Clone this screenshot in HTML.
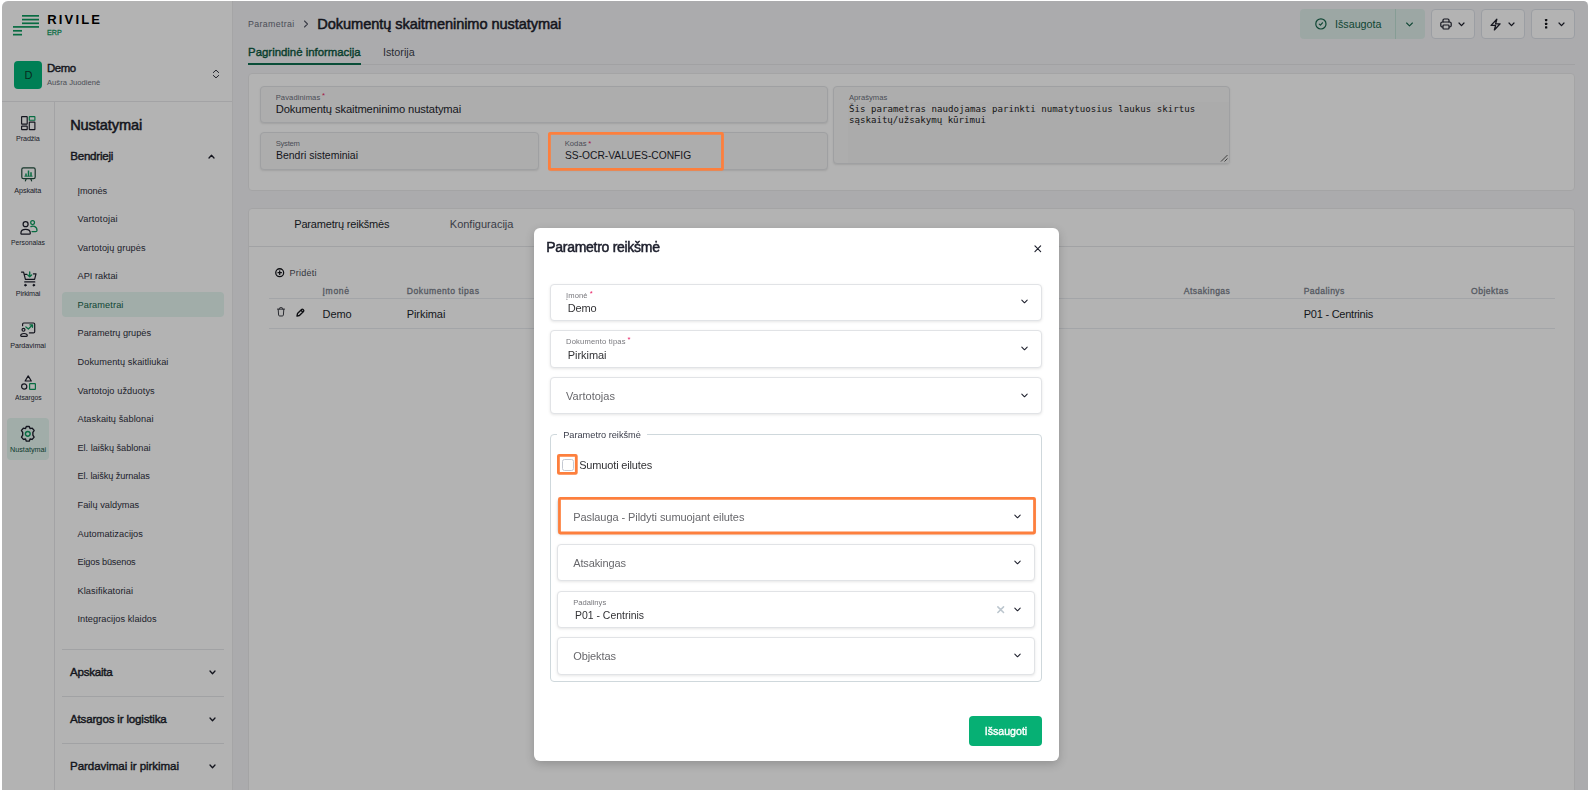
<!DOCTYPE html>
<html lang="lt"><head><meta charset="utf-8"><title>Dokumentų skaitmeninimo nustatymai</title>
<style>
html,body{margin:0;padding:0;}
body{width:1588px;height:790px;overflow:hidden;background:#fff;position:relative;font-family:"Liberation Sans",sans-serif;}
#app{position:absolute;left:0;top:0;width:1588px;height:790px;background:#f4f4f7;overflow:hidden;clip-path:inset(1px 0 0 2px round 6px 4.5px 0 0);}
#dim{position:absolute;left:0;top:0;width:1588px;height:790px;background:rgba(0,0,0,.298);}
#ann{position:absolute;left:0;top:0;width:1588px;height:790px;overflow:hidden;will-change:transform;}
.t{position:absolute;white-space:nowrap;display:block;}
.b{position:absolute;box-sizing:border-box;}
svg{position:absolute;overflow:visible;}
.fld{position:absolute;box-sizing:border-box;background:#f7f7f7;border:1px solid #e3e4e7;border-radius:4px;box-shadow:0 1px 2px rgba(0,0,0,.10);}
.mf{position:absolute;box-sizing:border-box;background:#fff;border:1px solid #e1e3e6;border-radius:4px;box-shadow:0 1px 3px rgba(0,0,0,.10);}
.btn{position:absolute;box-sizing:border-box;background:#fff;border:1px solid #dde1e9;border-radius:4px;}
.hl{position:absolute;box-sizing:border-box;border:2.7px solid #fd7f3d;border-radius:2px;}
i.p{display:inline-block;width:0;height:0;vertical-align:baseline;}

</style></head>
<body>
<div id="app">
<!-- sidebar -->
<div class="b" style="left:0;top:0;width:233px;height:790px;background:#fff;border-right:1px solid #ebebed;"></div>
<div class="b" style="left:0;top:101px;width:232px;height:1px;background:#e9e9eb;"></div>
<div class="b" style="left:54px;top:101px;width:1px;height:689px;background:#e9e9eb;"></div>
<!-- logo -->
<svg style="left:13px;top:15.15px" width="26" height="21" viewBox="0 0 26 21">
<g fill="#0c9a5e"><rect x="9" y="0" width="17" height="1.7"/><rect x="9" y="3.75" width="17" height="1.7"/><rect x="9" y="7.45" width="17" height="1.7"/><rect x="0" y="11.05" width="26" height="1.7"/><rect x="0" y="14.95" width="9" height="1.7"/><rect x="0" y="18.8" width="9" height="1.7"/></g></svg>
<div class="b" style="left:14px;top:61px;width:28px;height:28px;border-radius:4px;background:#00b67a;"></div>
<svg style="left:212px;top:69px" width="8" height="10" viewBox="0 0 8 10" fill="none" stroke="#1d1f2c" stroke-width="0.9" stroke-linecap="round" stroke-linejoin="round"><path d="M1.3 3.6 L4 1.1 L6.7 3.6"/><path d="M1.3 6.4 L4 8.9 L6.7 6.4"/></svg>
<!-- rail highlight -->
<div class="b" style="left:7px;top:418px;width:42px;height:42px;border-radius:4px;background:#e5f7f1;"></div>
<!-- menu highlight -->
<div class="b" style="left:62px;top:292px;width:162px;height:25px;border-radius:4px;background:#e5f7f1;"></div>
<!-- section dividers -->
<div class="b" style="left:62px;top:649px;width:162px;height:1px;background:#e6e7ea;"></div>
<div class="b" style="left:62px;top:696px;width:162px;height:1px;background:#e6e7ea;"></div>
<div class="b" style="left:62px;top:743px;width:162px;height:1px;background:#e6e7ea;"></div>
<!-- chevrons sidebar -->
<svg style="left:207.5px;top:153.5px" width="7" height="5" viewBox="0 0 7 5" fill="none" stroke="#1d1f2c" stroke-width="1.3" stroke-linecap="round" stroke-linejoin="round"><path d="M1 4 L3.5 1.3 L6 4"/></svg>
<svg style="left:208.5px;top:669.6px" width="7" height="5" viewBox="0 0 7 5" fill="none" stroke="#1d1f2c" stroke-width="1.3" stroke-linecap="round" stroke-linejoin="round"><path d="M1 1 L3.5 3.7 L6 1"/></svg>
<svg style="left:208.5px;top:716.6px" width="7" height="5" viewBox="0 0 7 5" fill="none" stroke="#1d1f2c" stroke-width="1.3" stroke-linecap="round" stroke-linejoin="round"><path d="M1 1 L3.5 3.7 L6 1"/></svg>
<svg style="left:208.5px;top:763.6px" width="7" height="5" viewBox="0 0 7 5" fill="none" stroke="#1d1f2c" stroke-width="1.3" stroke-linecap="round" stroke-linejoin="round"><path d="M1 1 L3.5 3.7 L6 1"/></svg>
<!-- rail icons -->
<svg style="left:20.8px;top:115.7px" width="14.5" height="14.2" viewBox="0 0 14.5 14.2" fill="none" stroke="#1d1f2c" stroke-width="1.15" stroke-linejoin="round"><rect x="0.6" y="0.6" width="5.6" height="7.6" rx="0.4"/><rect x="0.6" y="10.1" width="5.6" height="3.5" rx="0.4"/><rect x="8.3" y="0.6" width="5.6" height="3.7" rx="0.4" stroke="#0c9a5e"/><rect x="8.3" y="6.2" width="5.6" height="7.4" rx="0.4"/></svg>
<svg style="left:20.5px;top:167.3px" width="15" height="15" viewBox="0 0 15 15" fill="none" stroke="#1f4d3d" stroke-width="1.2" stroke-linecap="round" stroke-linejoin="round"><rect x="0.8" y="0.8" width="13.4" height="10.8" rx="1.6"/><path d="M4.4 13.9 L5.2 11.8 M10.6 13.9 L9.8 11.8"/><g stroke="#0c9a5e" stroke-width="1.5" stroke-linecap="butt"><path d="M5 9.3 V6.6 M7.5 9.3 V3.4 M10 9.3 V5.2"/><path d="M3.4 9.2 H11.6" stroke-width="0.9"/></g></svg>
<svg style="left:19.5px;top:219.5px" width="18" height="15" viewBox="0 0 18 15" fill="none" stroke-width="1.25" stroke-linecap="round" stroke-linejoin="round"><g stroke="#0c9a5e"><circle cx="12.6" cy="2.6" r="1.9"/><path d="M10.9 6.6 Q12.6 5.7 14.4 6.3 Q17 7.4 17 10.4 Q17 11.6 15.6 11.6 H12"/></g><g stroke="#1d1f2c"><circle cx="5.6" cy="4.2" r="2.5"/><path d="M0.9 13.2 Q0.9 9.4 5.6 9.4 Q10.3 9.4 10.3 13.2 Q10.3 14.2 9.2 14.2 H2 Q0.9 14.2 0.9 13.2 Z"/></g></svg>
<svg style="left:20.5px;top:270.8px" width="16" height="16" viewBox="0 0 16 16" fill="none" stroke="#1d1f2c" stroke-width="1.2" stroke-linecap="round" stroke-linejoin="round"><path d="M0.5 1.1 H2.6 L4.4 8.4 H13.6 L15 2.9 H12.4 M3.3 3.3 H6"/><path d="M3.7 10.9 H13.8"/><circle cx="4.4" cy="14.2" r="0.85" fill="#1d1f2c" stroke-width="0.9"/><circle cx="12.8" cy="14.2" r="0.85" fill="#1d1f2c" stroke-width="0.9"/><g stroke="#0c9a5e" stroke-width="1.35"><path d="M8.7 0.9 V5.2 M6.8 3.9 L8.7 5.8 L10.6 3.9"/></g></svg>
<svg style="left:20.3px;top:322.3px" width="16" height="15" viewBox="0 0 16 15" fill="none" stroke="#1d1f2c" stroke-width="1.2" stroke-linecap="round" stroke-linejoin="round"><path d="M2.6 3.7 V2.2 Q2.6 1 3.8 1 H13.5 Q14.7 1 14.7 2.2 V9.7 Q14.7 10.9 13.5 10.9 H9.4"/><circle cx="3.5" cy="7.8" r="1.45"/><path d="M0.7 13.6 Q0.7 11.5 4 11.5 Q7.3 11.5 7.3 13.6 Q7.3 14.4 6.5 14.4 H1.5 Q0.7 14.4 0.7 13.6 Z"/><g stroke="#0c9a5e" stroke-width="1.3"><path d="M5.9 5 L8.4 7 L12.2 3.1 M9.9 2.8 H12.5 V5.3"/></g></svg>
<svg style="left:20.8px;top:374.6px" width="15" height="15" viewBox="0 0 15 15" fill="none" stroke="#1d1f2c" stroke-width="1.2" stroke-linejoin="round"><path d="M7.2 0.9 L10.3 6 H4.1 Z"/><circle cx="3.2" cy="11.5" r="2.6"/><rect x="8.6" y="8.6" width="5.8" height="5.8" rx="0.5" stroke="#0c9a5e"/></svg>
<svg style="left:20.2px;top:426.2px" width="15.6" height="15.6" viewBox="-6.8 -6.9 13.6 13.8" fill="none" stroke="#1d1f2c" stroke-width="1.2" stroke-linejoin="round"><path d="M-1.3 -6.5 H1.3 L2 -4.6 L3.9 -5 L5.6 -2.9 L4.5 -1.2 L4.5 1.2 L5.6 2.9 L3.9 5 L2 4.6 L1.3 6.5 H-1.3 L-2 4.6 L-3.9 5 L-5.6 2.9 L-4.5 1.2 L-4.5 -1.2 L-5.6 -2.9 L-3.9 -5 L-2 -4.6 Z"/><circle cx="0" cy="0" r="2.1" stroke="#0c9a5e" stroke-width="1.3"/></svg>

<!-- header -->
<svg style="left:302.5px;top:20px" width="6" height="8" viewBox="0 0 6 8" fill="none" stroke="#555866" stroke-width="1.1" stroke-linecap="round" stroke-linejoin="round"><path d="M1.5 1 L4.5 4 L1.5 7"/></svg>
<div class="b" style="left:248px;top:64px;width:1327px;height:1px;background:#e6e6e9;"></div>
<div class="b" style="left:248px;top:63px;width:113px;height:2px;background:#0e6e50;"></div>
<!-- top buttons -->
<div class="b" style="left:1300px;top:9px;width:125px;height:30px;border-radius:4px;background:#deeeea;"></div>
<div class="b" style="left:1395px;top:9px;width:1px;height:30px;background:#bfe0d4;"></div>
<svg style="left:1315px;top:18.4px" width="11.8" height="11.8" viewBox="0 0 11.8 11.8" fill="none" stroke="#17654b" stroke-width="1.2" stroke-linecap="round" stroke-linejoin="round"><circle cx="5.9" cy="5.9" r="5.1"/><path d="M4.3 6.1 L5.4 7.1 L7.5 4.8"/></svg>
<svg style="left:1406.4px;top:22px" width="7" height="5" viewBox="0 0 7 5" fill="none" stroke="#17654b" stroke-width="1.1" stroke-linecap="round" stroke-linejoin="round"><path d="M0.6 1 L3.5 3.9 L6.4 1"/></svg>
<div class="btn" style="left:1431px;top:9px;width:44px;height:30px;"></div>
<div class="btn" style="left:1481px;top:9px;width:44px;height:30px;"></div>
<div class="btn" style="left:1531px;top:9px;width:44px;height:30px;"></div>
<!-- printer -->
<svg style="left:1440px;top:18px" width="12" height="12" viewBox="0 0 12 12" fill="none" stroke="#1d1f2c" stroke-width="1.2" stroke-linecap="round" stroke-linejoin="round"><path d="M3 4 V2.2 Q3 1 4.2 1 H7.8 Q9 1 9 2.2 V4"/><rect x="0.8" y="4" width="10.4" height="5" rx="1.5"/><rect x="3" y="7" width="6" height="4" rx="0.8" fill="#fff"/></svg>
<svg style="left:1457.5px;top:21.5px" width="7" height="5" viewBox="0 0 7 5" fill="none" stroke="#1d1f2c" stroke-width="1.2" stroke-linecap="round" stroke-linejoin="round"><path d="M1 1 L3.5 3.7 L6 1"/></svg>
<!-- bolt -->
<svg style="left:1489.1px;top:17.5px" width="13.2" height="13.2" viewBox="0 0 24 24" fill="none" stroke="#1d1f2c" stroke-width="2.3" stroke-linecap="round" stroke-linejoin="round"><path d="M3.75 13.5 L14.25 2.25 L12 10.5 H20.25 L9.75 21.75 L12 13.5 Z"/></svg>
<svg style="left:1507.5px;top:21.5px" width="7" height="5" viewBox="0 0 7 5" fill="none" stroke="#1d1f2c" stroke-width="1.2" stroke-linecap="round" stroke-linejoin="round"><path d="M1 1 L3.5 3.7 L6 1"/></svg>
<!-- dots -->
<svg style="left:1544.7px;top:19.4px" width="2.4" height="10" viewBox="0 0 2.4 10" fill="#15161c"><rect x="0" y="0" width="2.3" height="2.3" rx="0.5"/><rect x="0" y="3.65" width="2.3" height="2.3" rx="0.5"/><rect x="0" y="7.3" width="2.3" height="2.3" rx="0.5"/></svg>
<svg style="left:1557.5px;top:21.5px" width="7" height="5" viewBox="0 0 7 5" fill="none" stroke="#1d1f2c" stroke-width="1.2" stroke-linecap="round" stroke-linejoin="round"><path d="M1 1 L3.5 3.7 L6 1"/></svg>
<!-- card1 -->
<div class="b" style="left:248px;top:73px;width:1327px;height:118px;background:#fff;border:1px solid #eaeaec;border-radius:4px;"></div>
<div class="fld" style="left:260px;top:86px;width:568px;height:37px;"></div>
<div class="fld" style="left:260px;top:132px;width:279px;height:38px;"></div>
<div class="fld" style="left:549px;top:132px;width:279px;height:38px;"></div>
<div class="fld" style="left:833px;top:86px;width:397px;height:78px;"></div>
<div class="b" style="left:848px;top:102px;width:381px;height:61px;background:#f4f4f4;"></div>
<svg style="left:1220px;top:153.5px" width="8" height="8" viewBox="0 0 8 8" fill="none" stroke="#333" stroke-width="0.8"><path d="M1 7.5 L7.5 1 M4.5 7.5 L7.5 4.5"/></svg>
<!-- card2 -->
<div class="b" style="left:248px;top:208px;width:1327px;height:600px;background:#fff;border:1px solid #eaeaec;border-radius:4px;"></div>
<div class="b" style="left:249px;top:246px;width:1325px;height:1px;background:#e6e7ea;"></div>
<div class="b" style="left:269px;top:298px;width:1286px;height:1px;background:#e9ecef;"></div>
<div class="b" style="left:269px;top:328px;width:1286px;height:1px;background:#e9ecef;"></div>
<!-- plus circle -->
<svg style="left:274.6px;top:268px" width="9.4" height="9.4" viewBox="0 0 10 10" fill="none" stroke="#15161c" stroke-width="1.35" stroke-linecap="round"><circle cx="5" cy="5" r="4.2"/><path d="M5 3.2 V6.8 M3.2 5 H6.8"/></svg>
<!-- trash -->
<svg style="left:276.5px;top:307.3px" width="8" height="9.6" viewBox="0 0 8 9.6" fill="none" stroke="#33353d" stroke-width="0.95" stroke-linecap="round" stroke-linejoin="round"><path d="M0.5 2.1 H7.5 M2.6 2 V1.2 Q2.6 0.6 3.2 0.6 H4.8 Q5.4 0.6 5.4 1.2 V2 M1.2 2.3 L1.6 8 Q1.7 9 2.7 9 H5.3 Q6.3 9 6.4 8 L6.8 2.3"/></svg>
<!-- pencil -->
<svg style="left:295.6px;top:307.8px" width="9" height="9" viewBox="0 0 9 9" fill="none" stroke="#15161c" stroke-width="1.35" stroke-linecap="round" stroke-linejoin="round"><path d="M1 8 L1.5 5.6 L5.6 1.5 Q6.3 0.8 7 1.5 L7.5 2 Q8.2 2.7 7.5 3.4 L3.4 7.5 Z M4.9 2.3 L6.7 4.1"/></svg>

<span class="t" style='left:47.3px;top:13.00px;font-size:13px;line-height:13px;font-weight:700;color:#000;letter-spacing:2.159px;'>RIVILE</span>
<span class="t" style='left:47.3px;top:29.00px;font-size:7.6px;line-height:7.6px;font-weight:400;color:#0c9a5e;-webkit-text-stroke:0.27px #0c9a5e;transform:scaleX(0.9408);transform-origin:0 50%;'>ERP</span>
<span class="t" style='left:24.5px;top:70.00px;font-size:11px;line-height:11px;font-weight:400;color:#0b3d2c;'>D</span>
<span class="t" style='left:47.0px;top:63.00px;font-size:11.4px;line-height:11.4px;font-weight:400;color:#1d1f2c;-webkit-text-stroke:0.41px #1d1f2c;letter-spacing:-0.397px;'>Demo</span>
<span class="t" style='left:47.0px;top:79.00px;font-size:7.6px;line-height:7.6px;font-weight:400;color:#6b6f7b;letter-spacing:0.040px;'>Aušra Juodienė</span>
<span class="t" style='left:16.0px;top:135.00px;font-size:7.2px;line-height:7.2px;font-weight:400;color:#2b2d3a;letter-spacing:-0.096px;'>Pradžia</span>
<span class="t" style='left:14.3px;top:187.00px;font-size:7.2px;line-height:7.2px;font-weight:400;color:#2b2d3a;letter-spacing:-0.083px;'>Apskaita</span>
<span class="t" style='left:11.2px;top:239.00px;font-size:7.2px;line-height:7.2px;font-weight:400;color:#2b2d3a;transform:scaleX(0.9397);transform-origin:0 50%;'>Personalas</span>
<span class="t" style='left:15.8px;top:290.00px;font-size:7.2px;line-height:7.2px;font-weight:400;color:#2b2d3a;letter-spacing:-0.138px;'>Pirkimai</span>
<span class="t" style='left:10.3px;top:342.00px;font-size:7.2px;line-height:7.2px;font-weight:400;color:#2b2d3a;letter-spacing:-0.039px;'>Pardavimai</span>
<span class="t" style='left:14.6px;top:394.00px;font-size:7.2px;line-height:7.2px;font-weight:400;color:#2b2d3a;transform:scaleX(0.9410);transform-origin:0 50%;'>Atsargos</span>
<span class="t" style='left:10.0px;top:446.00px;font-size:7.2px;line-height:7.2px;font-weight:400;color:#14533f;letter-spacing:0.027px;'>Nustatymai</span>
<span class="t" style='left:70.2px;top:118.00px;font-size:14.6px;line-height:14.6px;font-weight:400;color:#1d1f2c;-webkit-text-stroke:0.53px #1d1f2c;letter-spacing:-0.111px;'>Nustatymai</span>
<span class="t" style='left:70.2px;top:150.00px;font-size:11.6px;line-height:11.6px;font-weight:400;color:#1d1f2c;-webkit-text-stroke:0.42px #1d1f2c;letter-spacing:-0.241px;'>Bendrieji</span>
<span class="t" style='left:77.5px;top:187.00px;font-size:9.2px;line-height:9.2px;font-weight:400;color:#2e3040;letter-spacing:-0.128px;'>Įmonės</span>
<span class="t" style='left:77.5px;top:215.00px;font-size:9.2px;line-height:9.2px;font-weight:400;color:#2e3040;letter-spacing:0.218px;'>Vartotojai</span>
<span class="t" style='left:77.5px;top:244.00px;font-size:9.2px;line-height:9.2px;font-weight:400;color:#2e3040;letter-spacing:0.091px;'>Vartotojų grupės</span>
<span class="t" style='left:77.5px;top:272.00px;font-size:9.2px;line-height:9.2px;font-weight:400;color:#2e3040;letter-spacing:0.030px;'>API raktai</span>
<span class="t" style='left:77.5px;top:301.00px;font-size:9.2px;line-height:9.2px;font-weight:400;color:#17654b;letter-spacing:0.107px;'>Parametrai</span>
<span class="t" style='left:77.5px;top:329.00px;font-size:9.2px;line-height:9.2px;font-weight:400;color:#2e3040;letter-spacing:-0.003px;'>Parametrų grupės</span>
<span class="t" style='left:77.5px;top:358.00px;font-size:9.2px;line-height:9.2px;font-weight:400;color:#2e3040;letter-spacing:0.076px;'>Dokumentų skaitliukai</span>
<span class="t" style='left:77.5px;top:387.00px;font-size:9.2px;line-height:9.2px;font-weight:400;color:#2e3040;letter-spacing:0.105px;'>Vartotojo užduotys</span>
<span class="t" style='left:77.5px;top:415.00px;font-size:9.2px;line-height:9.2px;font-weight:400;color:#2e3040;letter-spacing:0.084px;'>Ataskaitų šablonai</span>
<span class="t" style='left:77.5px;top:444.00px;font-size:9.2px;line-height:9.2px;font-weight:400;color:#2e3040;letter-spacing:-0.030px;'>El. laiškų šablonai</span>
<span class="t" style='left:77.5px;top:472.00px;font-size:9.2px;line-height:9.2px;font-weight:400;color:#2e3040;letter-spacing:-0.097px;'>El. laiškų žurnalas</span>
<span class="t" style='left:77.5px;top:501.00px;font-size:9.2px;line-height:9.2px;font-weight:400;color:#2e3040;letter-spacing:0.032px;'>Failų valdymas</span>
<span class="t" style='left:77.5px;top:530.00px;font-size:9.2px;line-height:9.2px;font-weight:400;color:#2e3040;letter-spacing:0.075px;'>Automatizacijos</span>
<span class="t" style='left:77.5px;top:558.00px;font-size:9.2px;line-height:9.2px;font-weight:400;color:#2e3040;letter-spacing:-0.173px;'>Eigos būsenos</span>
<span class="t" style='left:77.5px;top:587.00px;font-size:9.2px;line-height:9.2px;font-weight:400;color:#2e3040;letter-spacing:0.098px;'>Klasifikatoriai</span>
<span class="t" style='left:77.5px;top:615.00px;font-size:9.2px;line-height:9.2px;font-weight:400;color:#2e3040;letter-spacing:0.050px;'>Integracijos klaidos</span>
<span class="t" style='left:70.0px;top:666.00px;font-size:11.6px;line-height:11.6px;font-weight:400;color:#1d1f2c;-webkit-text-stroke:0.42px #1d1f2c;letter-spacing:-0.238px;'>Apskaita</span>
<span class="t" style='left:70.0px;top:713.00px;font-size:11.6px;line-height:11.6px;font-weight:400;color:#1d1f2c;-webkit-text-stroke:0.42px #1d1f2c;letter-spacing:-0.187px;'>Atsargos ir logistika</span>
<span class="t" style='left:70.0px;top:760.00px;font-size:11.6px;line-height:11.6px;font-weight:400;color:#1d1f2c;-webkit-text-stroke:0.42px #1d1f2c;letter-spacing:-0.086px;'>Pardavimai ir pirkimai</span>
<span class="t" style='left:248.1px;top:20.00px;font-size:8.8px;line-height:8.8px;font-weight:400;color:#6b6f7b;letter-spacing:0.341px;'>Parametrai</span>
<span class="t" style='left:317.3px;top:17.00px;font-size:14.6px;line-height:14.6px;font-weight:400;color:#1d1f2c;-webkit-text-stroke:0.53px #1d1f2c;letter-spacing:-0.078px;'>Dokumentų skaitmeninimo nustatymai</span>
<span class="t" style='left:248.1px;top:47.00px;font-size:11.4px;line-height:11.4px;font-weight:400;color:#0e5a42;-webkit-text-stroke:0.41px #0e5a42;letter-spacing:-0.005px;'>Pagrindinė informacija</span>
<span class="t" style='left:383.4px;top:47.00px;font-size:11.4px;line-height:11.4px;font-weight:400;color:#3a3d4a;transform:scaleX(0.9445);transform-origin:0 50%;'>Istorija</span>
<span class="t" style='left:1334.5px;top:19.00px;font-size:11.4px;line-height:11.4px;font-weight:400;color:#17654b;transform:scaleX(0.9412);transform-origin:0 50%;'>Išsaugota</span>
<span class="t" style='left:275.7px;top:94.00px;font-size:7.6px;line-height:7.6px;font-weight:400;color:#6b6f7b;letter-spacing:0.102px;'>Pavadinimas</span>
<span class="t" style='left:322.0px;top:92.00px;font-size:7.6px;line-height:7.6px;font-weight:400;color:#e91e63;'>*</span>
<span class="t" style='left:275.7px;top:104.00px;font-size:11.2px;line-height:11.2px;font-weight:400;color:#1d1f2c;letter-spacing:-0.107px;'>Dokumentų skaitmeninimo nustatymai</span>
<span class="t" style='left:275.7px;top:140.00px;font-size:7.6px;line-height:7.6px;font-weight:400;color:#6b6f7b;letter-spacing:-0.226px;'>System</span>
<span class="t" style='left:275.7px;top:150.00px;font-size:11.2px;line-height:11.2px;font-weight:400;color:#1d1f2c;transform:scaleX(0.9353);transform-origin:0 50%;'>Bendri sisteminiai</span>
<span class="t" style='left:564.7px;top:140.00px;font-size:7.6px;line-height:7.6px;font-weight:400;color:#6b6f7b;letter-spacing:0.063px;'>Kodas</span>
<span class="t" style='left:588.3px;top:140.00px;font-size:7.6px;line-height:7.6px;font-weight:400;color:#e91e63;'>*</span>
<span class="t" style='left:564.7px;top:150.00px;font-size:11.2px;line-height:11.2px;font-weight:400;color:#1d1f2c;transform:scaleX(0.9158);transform-origin:0 50%;'>SS-OCR-VALUES-CONFIG</span>
<span class="t" style='left:849.0px;top:94.00px;font-size:7.6px;line-height:7.6px;font-weight:400;color:#6b6f7b;letter-spacing:0.039px;'>Aprašymas</span>
<span class="t" style='left:849.0px;top:105.00px;font-size:9.1px;line-height:9.1px;font-weight:400;color:#222;font-family:"DejaVu Sans Mono", "Liberation Mono", monospace;letter-spacing:0.021px;'>Šis parametras naudojamas parinkti numatytuosius laukus skirtus</span>
<span class="t" style='left:849.0px;top:116.00px;font-size:9.1px;line-height:9.1px;font-weight:400;color:#222;font-family:"DejaVu Sans Mono", "Liberation Mono", monospace;letter-spacing:0.005px;'>sąskaitų/užsakymų kūrimui</span>
<span class="t" style='left:294.3px;top:219.00px;font-size:11px;line-height:11px;font-weight:400;color:#1d1f2c;letter-spacing:-0.190px;'>Parametrų reikšmės</span>
<span class="t" style='left:449.8px;top:219.00px;font-size:11px;line-height:11px;font-weight:400;color:#555866;letter-spacing:0.001px;'>Konfiguracija</span>
<span class="t" style='left:289.6px;top:269.00px;font-size:9px;line-height:9px;font-weight:400;color:#4c4e58;letter-spacing:0.214px;'>Pridėti</span>
<span class="t" style='left:322.6px;top:287.00px;font-size:8.6px;line-height:8.6px;font-weight:400;color:#7a7f8c;-webkit-text-stroke:0.31px #7a7f8c;letter-spacing:0.627px;'>Įmonė</span>
<span class="t" style='left:406.7px;top:287.00px;font-size:8.6px;line-height:8.6px;font-weight:400;color:#7a7f8c;-webkit-text-stroke:0.31px #7a7f8c;letter-spacing:0.557px;'>Dokumento tipas</span>
<span class="t" style='left:1183.8px;top:287.00px;font-size:8.6px;line-height:8.6px;font-weight:400;color:#7a7f8c;-webkit-text-stroke:0.31px #7a7f8c;letter-spacing:0.450px;'>Atsakingas</span>
<span class="t" style='left:1303.7px;top:287.00px;font-size:8.6px;line-height:8.6px;font-weight:400;color:#7a7f8c;-webkit-text-stroke:0.31px #7a7f8c;letter-spacing:0.429px;'>Padalinys</span>
<span class="t" style='left:1471.0px;top:287.00px;font-size:8.6px;line-height:8.6px;font-weight:400;color:#7a7f8c;-webkit-text-stroke:0.31px #7a7f8c;letter-spacing:0.483px;'>Objektas</span>
<span class="t" style='left:322.6px;top:309.00px;font-size:11px;line-height:11px;font-weight:400;color:#1d1f2c;letter-spacing:-0.115px;'>Demo</span>
<span class="t" style='left:406.7px;top:309.00px;font-size:11px;line-height:11px;font-weight:400;color:#1d1f2c;letter-spacing:-0.061px;'>Pirkimai</span>
<span class="t" style='left:1303.7px;top:309.00px;font-size:11px;line-height:11px;font-weight:400;color:#1d1f2c;letter-spacing:-0.233px;'>P01 - Centrinis</span>
<div id="dim"></div>
</div>
<div id="ann">
<!-- Kodas highlight on page -->
<svg style="left:548.2px;top:132.2px" width="175.9" height="38.8" viewBox="0 0 175.9 38.8" fill="none"><rect x="1.4" y="1.4" width="173.10" height="36.00" rx="0.7" stroke="#fd7f3d" stroke-width="2.8"/></svg>
<!-- modal -->
<div class="b" style="left:534px;top:228px;width:525px;height:533px;background:#fff;border-radius:6px;box-shadow:0 3px 10px rgba(0,0,0,.19);"></div>
<svg style="left:1034px;top:245.2px" width="7.6" height="7.6" viewBox="0 0 8 8" fill="none" stroke="#1d1f2c" stroke-width="1.2" stroke-linecap="round"><path d="M1 1 L7 7 M7 1 L1 7"/></svg>
<div class="mf" style="left:550px;top:284px;width:492px;height:37px;"></div>
<div class="mf" style="left:550px;top:330px;width:492px;height:38px;"></div>
<div class="mf" style="left:550px;top:377px;width:492px;height:37px;"></div>
<!-- fieldset -->
<div class="b" style="left:550px;top:434px;width:492px;height:248px;border:1px solid #cfd8dc;border-radius:4px;"></div>
<div class="b" style="left:557px;top:430px;width:89.5px;height:10px;background:#fff;"></div>
<!-- checkbox -->
<div class="b" style="left:562px;top:459px;width:12px;height:12px;border:1px solid #c4c9d2;border-radius:2.5px;background:#fff;"></div>
<svg style="left:557.2px;top:454.1px" width="20.7" height="20.8" viewBox="0 0 20.7 20.8" fill="none"><rect x="1.4" y="1.4" width="17.90" height="18.00" rx="0.7" stroke="#fd7f3d" stroke-width="2.8"/></svg>
<div class="mf" style="left:557px;top:498px;width:478px;height:36px;"></div>
<svg style="left:558.1px;top:497.2px" width="478.0" height="37.4" viewBox="0 0 478.0 37.4" fill="none"><rect x="1.4" y="1.4" width="475.20" height="34.60" rx="0.7" stroke="#fd7f3d" stroke-width="2.8"/></svg>
<div class="mf" style="left:557px;top:544px;width:478px;height:37px;"></div>
<div class="mf" style="left:557px;top:591px;width:478px;height:37px;"></div>
<div class="mf" style="left:557px;top:637px;width:478px;height:38px;"></div>
<!-- chevrons -->
<svg style="left:1020.9px;top:299.3px" width="7" height="5" viewBox="0 0 7 5" fill="none" stroke="#1d1f2c" stroke-width="1.05" stroke-linecap="round" stroke-linejoin="round"><path d="M0.8 1.1 L3.5 3.8 L6.2 1.1"/></svg>
<svg style="left:1020.9px;top:345.8px" width="7" height="5" viewBox="0 0 7 5" fill="none" stroke="#1d1f2c" stroke-width="1.05" stroke-linecap="round" stroke-linejoin="round"><path d="M0.8 1.1 L3.5 3.8 L6.2 1.1"/></svg>
<svg style="left:1020.9px;top:392.5px" width="7" height="5" viewBox="0 0 7 5" fill="none" stroke="#1d1f2c" stroke-width="1.05" stroke-linecap="round" stroke-linejoin="round"><path d="M0.8 1.1 L3.5 3.8 L6.2 1.1"/></svg>
<svg style="left:1013.8px;top:513.5px" width="7" height="5" viewBox="0 0 7 5" fill="none" stroke="#1d1f2c" stroke-width="1.05" stroke-linecap="round" stroke-linejoin="round"><path d="M0.8 1.1 L3.5 3.8 L6.2 1.1"/></svg>
<svg style="left:1013.8px;top:560px" width="7" height="5" viewBox="0 0 7 5" fill="none" stroke="#1d1f2c" stroke-width="1.05" stroke-linecap="round" stroke-linejoin="round"><path d="M0.8 1.1 L3.5 3.8 L6.2 1.1"/></svg>
<svg style="left:1013.8px;top:606.5px" width="7" height="5" viewBox="0 0 7 5" fill="none" stroke="#1d1f2c" stroke-width="1.05" stroke-linecap="round" stroke-linejoin="round"><path d="M0.8 1.1 L3.5 3.8 L6.2 1.1"/></svg>
<svg style="left:1013.8px;top:653px" width="7" height="5" viewBox="0 0 7 5" fill="none" stroke="#1d1f2c" stroke-width="1.05" stroke-linecap="round" stroke-linejoin="round"><path d="M0.8 1.1 L3.5 3.8 L6.2 1.1"/></svg>
<!-- clear x -->
<svg style="left:996.7px;top:605.8px" width="7.4" height="7.4" viewBox="0 0 7 7" fill="none" stroke="#bcc6ce" stroke-width="1.45" stroke-linecap="round"><path d="M0.8 0.8 L6.2 6.2 M6.2 0.8 L0.8 6.2"/></svg>
<!-- save button -->
<div class="b" style="left:969px;top:716px;width:73px;height:30px;border-radius:4px;background:#06b074;"></div>

<span class="t" style='left:546.2px;top:240.00px;font-size:14px;line-height:14px;font-weight:400;color:#1d1f2c;-webkit-text-stroke:0.50px #1d1f2c;letter-spacing:-0.279px;'>Parametro reikšmė</span>
<span class="t" style='left:566.0px;top:292.00px;font-size:7.6px;line-height:7.6px;font-weight:400;color:#77777c;letter-spacing:0.098px;'>Įmonė</span>
<span class="t" style='left:589.8px;top:290.00px;font-size:7.6px;line-height:7.6px;font-weight:400;color:#e91e63;'>*</span>
<span class="t" style='left:567.8px;top:303.00px;font-size:11px;line-height:11px;font-weight:400;color:#333336;letter-spacing:-0.181px;'>Demo</span>
<span class="t" style='left:566.0px;top:338.00px;font-size:7.6px;line-height:7.6px;font-weight:400;color:#77777c;letter-spacing:0.180px;'>Dokumento tipas</span>
<span class="t" style='left:627.6px;top:336.00px;font-size:7.6px;line-height:7.6px;font-weight:400;color:#e91e63;'>*</span>
<span class="t" style='left:567.8px;top:350.00px;font-size:11px;line-height:11px;font-weight:400;color:#333336;letter-spacing:-0.061px;'>Pirkimai</span>
<span class="t" style='left:566.0px;top:391.00px;font-size:11px;line-height:11px;font-weight:400;color:#68686c;letter-spacing:0.031px;'>Vartotojas</span>
<span class="t" style='left:563.2px;top:431.00px;font-size:9.2px;line-height:9.2px;font-weight:400;color:#3a3d4a;letter-spacing:0.006px;'>Parametro reikšmė</span>
<span class="t" style='left:579.2px;top:460.00px;font-size:11px;line-height:11px;font-weight:400;color:#333336;letter-spacing:-0.158px;'>Sumuoti eilutes</span>
<span class="t" style='left:573.2px;top:512.00px;font-size:11px;line-height:11px;font-weight:400;color:#68686c;letter-spacing:-0.070px;'>Paslauga - Pildyti sumuojant eilutes</span>
<span class="t" style='left:573.2px;top:558.00px;font-size:11px;line-height:11px;font-weight:400;color:#68686c;letter-spacing:-0.124px;'>Atsakingas</span>
<span class="t" style='left:573.2px;top:599.00px;font-size:7.6px;line-height:7.6px;font-weight:400;color:#77777c;letter-spacing:0.008px;'>Padalinys</span>
<span class="t" style='left:574.7px;top:610.00px;font-size:11px;line-height:11px;font-weight:400;color:#333336;transform:scaleX(0.9496);transform-origin:0 50%;'>P01 - Centrinis</span>
<span class="t" style='left:573.2px;top:651.00px;font-size:11px;line-height:11px;font-weight:400;color:#68686c;letter-spacing:-0.089px;'>Objektas</span>
<span class="t" style='left:984.7px;top:726.00px;font-size:10.6px;line-height:10.6px;font-weight:400;color:#fff;-webkit-text-stroke:0.38px #fff;letter-spacing:0.012px;'>Išsaugoti</span>
</div>
</body></html>
